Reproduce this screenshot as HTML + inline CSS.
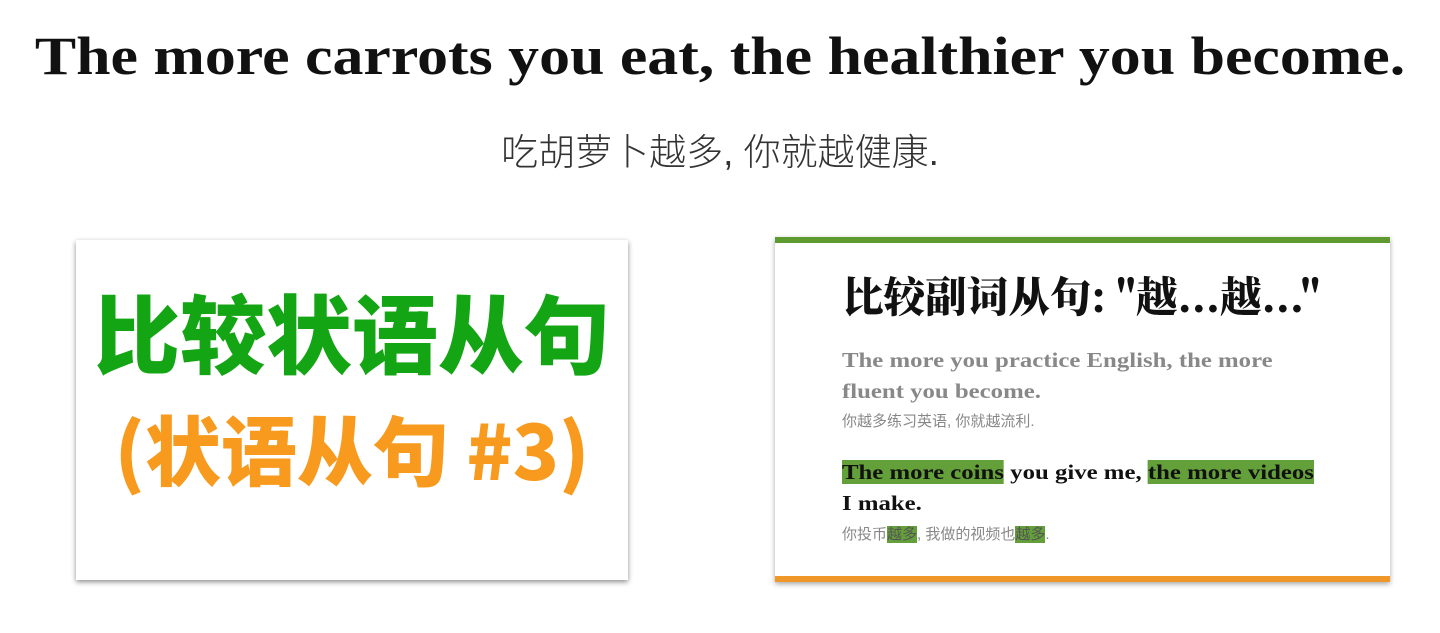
<!DOCTYPE html>
<html><head><meta charset="utf-8"><style>
body{margin:0;width:1440px;height:633px;background:#fff;overflow:hidden;position:relative;font-family:"Liberation Serif","Noto Serif CJK SC",serif}
.h{position:absolute;left:0;width:1440px;text-align:center;top:25px;font-size:54px;font-weight:bold;color:#111;transform:scaleX(1.145);transform-origin:720px 0;white-space:nowrap}
.s{position:absolute;left:0;width:1440px;text-align:center;top:122px;font-size:37px;color:#333;font-family:"Liberation Sans","Noto Sans CJK SC",sans-serif;font-weight:300}
.c1{position:absolute;left:76px;top:240px;width:552px;height:340px;background:#fff;box-shadow:0 2px 5px rgba(0,0,0,.45)}
.c2{position:absolute;left:775px;top:237px;width:615px;height:345px;background:#fff;box-shadow:0 2px 5px rgba(0,0,0,.35);border-top:6px solid #5e9a2f;border-bottom:6px solid #f0972a;box-sizing:border-box}
.t{position:absolute;left:67px;top:22px;font-size:42px;font-weight:900;color:#111;font-family:"Noto Serif CJK SC",serif;white-space:nowrap;transform:scaleX(0.99);transform-origin:0 0}
.p{position:absolute;left:67px;font-size:21px;font-weight:bold;line-height:31px;white-space:nowrap;transform:scaleX(1.18);transform-origin:0 0}
.z{position:absolute;left:67px;font-size:15px;color:#888;font-family:"Liberation Sans","Noto Sans CJK SC",sans-serif;white-space:nowrap}
.m{background:#64a03a}
.z .m{color:#555}
</style></head><body>
<div class="h">The more carrots you eat, the healthier you become.</div>
<div class="s">吃胡萝卜越多, 你就越健康.</div>
<div class="c1"></div>
<div style="position:absolute;left:76px;top:0;width:552px;height:633px">
<div style="position:absolute;width:552px;text-align:center;font-family:'Noto Sans CJK SC',sans-serif;font-weight:900;top:270px;font-size:86px;color:#14a514;line-height:120px">比较状语从句</div>
<div style="position:absolute;width:552px;text-align:center;font-family:'Noto Sans CJK SC',sans-serif;font-weight:900;top:392px;font-size:76px;color:#f79a1e;line-height:110px">(状语从句 #3)</div>
</div>
<div class="c2">
<div class="t">比较副词从句: "越...越..."</div>
<div class="p" style="top:102px;color:#888">The more you practice English, the more<br>fluent you become.</div>
<div class="z" style="top:167px">你越多练习英语, 你就越流利.</div>
<div class="p" style="top:214px;color:#111"><span class="m">The more coins</span> you give me, <span class="m">the more videos</span><br>I make.</div>
<div class="z" style="top:280px">你投币<span class="m">越多</span>, 我做的视频也<span class="m">越多</span>.</div>
</div>
</body></html>
